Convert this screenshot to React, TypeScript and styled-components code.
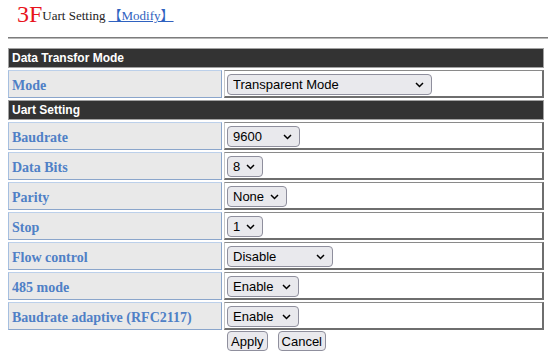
import styled, { createGlobalStyle } from "styled-components";

const GlobalStyle = createGlobalStyle`
  body {
    margin: 0;
    background: #ffffff;
    font-family: "Liberation Serif", "Times New Roman", serif;
  }
`;

const Page = styled.div`
  width: 550px;
`;

const Title = styled.div`
  display: flex;
  align-items: flex-end;
  padding: 2px 0 0 17px;
`;

const Floor = styled.span`
  font-size: 24px;
  line-height: 24px;
  color: #e8141c;
`;

const Caption = styled.span`
  font-size: 13px;
  line-height: 13px;
  margin-bottom: 4px;
  color: #222;
`;

const ModifyLink = styled.a`
  margin-left: 3px;
  color: #2f62c0;
  text-decoration: underline;
  cursor: pointer;
  font-family: "Liberation Serif", "Noto Sans CJK SC", serif;
`;

const Rule = styled.hr`
  margin: 11px 0 0 8px;
  width: 540px;
  height: 0;
  border: none;
  border-top: 1px solid #7c7c7c;
  border-bottom: 1px solid #b8b8b8;
`;

const Table = styled.table`
  margin: 7px 0 0 6px;
  width: 540px;
  border-collapse: separate;
  border-spacing: 2px;
  table-layout: fixed;
`;

const SectionCell = styled.td`
  box-sizing: border-box;
  height: 20px;
  padding: 0 0 0 3px;
  background: #333333;
  border: 1px solid #a2a2a2;
  color: #ffffff;
  font-family: "Liberation Sans", Arial, sans-serif;
  font-weight: bold;
  font-size: 12px;
  vertical-align: middle;
`;

const LabelCell = styled.td`
  box-sizing: border-box;
  height: 28px;
  padding: 3px 0 0 3px;
  background: #e9e9e9;
  border: 1px solid;
  border-color: #bcd0ea #8aa5cb #8aa5cb #a6bfe0;
  color: #4f80c6;
  font-weight: bold;
  font-size: 14px;
  vertical-align: middle;
  white-space: nowrap;
`;

const ValueCell = styled.td`
  box-sizing: border-box;
  height: 28px;
  padding: 2px 0 0 2px;
  background: #ffffff;
  border-style: solid;
  border-width: 1px 2px 2px 1px;
  border-color: #8a8a8a #6e6e6e #6e6e6e #c8c8c8;
  vertical-align: middle;
`;

const SelectWrap = styled.span<{ $w: number }>`
  position: relative;
  display: inline-block;
  width: ${(p) => p.$w}px;
  height: 21px;
  vertical-align: middle;
`;

const Select = styled.select`
  appearance: none;
  box-sizing: border-box;
  width: 100%;
  height: 100%;
  margin: 0;
  padding: 0 18px 0 5px;
  background: #e9e9ed;
  border: 1px solid #8f8f9d;
  border-radius: 4px;
  color: #000;
  font-family: "Liberation Sans", Arial, sans-serif;
  font-size: 13px;
`;

const Chevron = styled.svg`
  position: absolute;
  right: 8px;
  top: 8px;
  pointer-events: none;
`;

const Actions = styled.div`
  display: flex;
  gap: 10px;
  margin-top: -1px;
  padding-left: 227px;
`;

const Button = styled.button`
  box-sizing: border-box;
  height: 20px;
  padding: 0 3px;
  background: #e9e9ed;
  border: 1px solid #8f8f9d;
  border-radius: 4px;
  color: #000;
  font-family: "Liberation Sans", Arial, sans-serif;
  font-size: 13px;
`;

type Field = { label: string; options: string[]; width: number };

const modeFields: Field[] = [
  { label: "Mode", options: ["Transparent Mode", "Modbus TCP"], width: 205 },
];

const uartFields: Field[] = [
  { label: "Baudrate", options: ["9600", "19200", "38400", "115200"], width: 73 },
  { label: "Data Bits", options: ["8", "7"], width: 36 },
  { label: "Parity", options: ["None", "Odd", "Even"], width: 60 },
  { label: "Stop", options: ["1", "2"], width: 36 },
  { label: "Flow control", options: ["Disable", "Hardware"], width: 106 },
  { label: "485 mode", options: ["Enable", "Disable"], width: 72 },
  { label: "Baudrate adaptive (RFC2117)", options: ["Enable", "Disable"], width: 72 },
];

function Dropdown({ options, width }: { options: string[]; width: number }) {
  return (
    <SelectWrap $w={width}>
      <Select defaultValue={options[0]}>
        {options.map((o) => (
          <option key={o}>{o}</option>
        ))}
      </Select>
      <Chevron width="9" height="6" viewBox="0 0 9 6">
        <path d="M1 1 L4.5 4.5 L8 1" fill="none" stroke="#000" strokeWidth="1.5" />
      </Chevron>
    </SelectWrap>
  );
}

function Rows({ fields }: { fields: Field[] }) {
  return (
    <>
      {fields.map((f) => (
        <tr key={f.label}>
          <LabelCell>{f.label}</LabelCell>
          <ValueCell>
            <Dropdown options={f.options} width={f.width} />
          </ValueCell>
        </tr>
      ))}
    </>
  );
}

export default function App() {
  return (
    <Page>
      <GlobalStyle />
      <Title>
        <Floor>3F</Floor>
        <Caption>
          Uart Setting
          <ModifyLink>【Modify】</ModifyLink>
        </Caption>
      </Title>
      <Rule />
      <Table>
        <colgroup>
          <col style={{ width: 214 }} />
          <col />
        </colgroup>
        <tbody>
          <tr>
            <SectionCell colSpan={2}>Data Transfor Mode</SectionCell>
          </tr>
          <Rows fields={modeFields} />
          <tr>
            <SectionCell colSpan={2}>Uart Setting</SectionCell>
          </tr>
          <Rows fields={uartFields} />
        </tbody>
      </Table>
      <Actions>
        <Button>Apply</Button>
        <Button>Cancel</Button>
      </Actions>
    </Page>
  );
}
